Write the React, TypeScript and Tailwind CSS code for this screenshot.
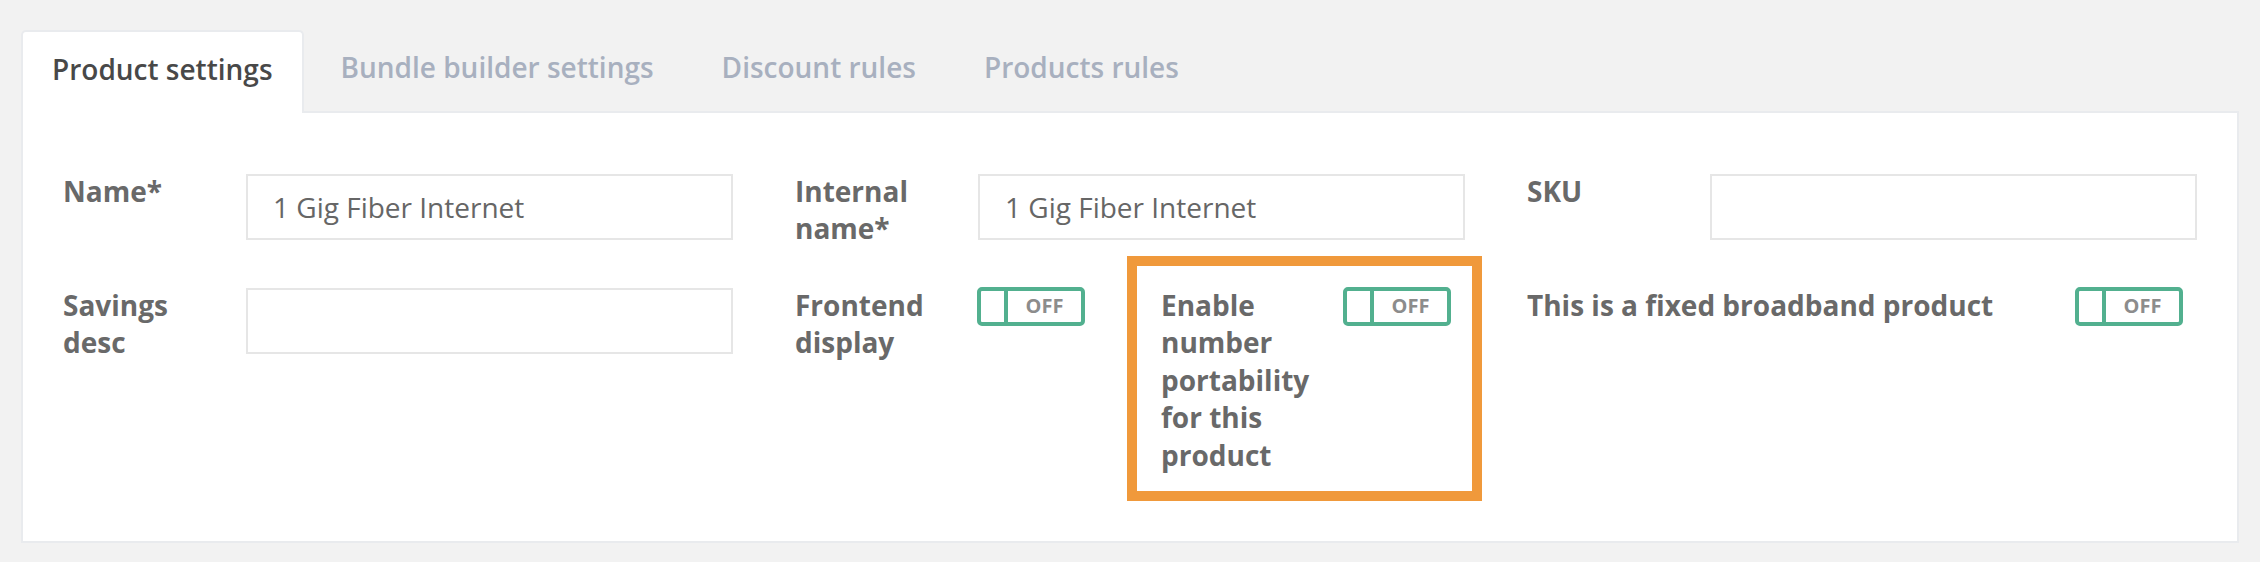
import React from "react";

const font = { fontFamily: '"Open Sans", "Noto Sans", sans-serif' };

function Toggle() {
  return (
    <div className="flex h-[39px] w-[108px] shrink-0 overflow-hidden rounded-[5px] border-[4px] border-[#52b08f] bg-white">
      <div className="h-full w-[27px] border-r-[4px] border-[#52b08f]" />
      <div className="flex flex-1 items-center justify-center text-[20px] font-bold leading-none text-[#8c8c8c]">
        OFF
      </div>
    </div>
  );
}

function TextField({ label, value }: { label: string; value?: string }) {
  return (
    <div className="col-span-2 flex items-start">
      <div className="w-[183px] shrink-0 pr-[33px] text-[28px] font-bold leading-[37.5px] text-[#696969]">
        {label}
      </div>
      <input
        readOnly
        defaultValue={value ?? ""}
        className="mt-px h-[66px] min-w-0 flex-1 border-2 border-[#e6e6e6] bg-white px-[25px] text-[28px] text-[#666] outline-none"
        style={font}
      />
    </div>
  );
}

function ToggleField({ label, labelWidth, children }: { label: string; labelWidth: string; children?: React.ReactNode }) {
  return (
    <div className="relative flex items-start">
      <div className={`${labelWidth} shrink-0 text-[28px] font-bold leading-[37.5px] text-[#696969]`}>{label}</div>
      <Toggle />
      {children}
    </div>
  );
}

export default function App() {
  return (
    <div className="h-[562px] w-full bg-[#f2f2f2] px-[21px] pt-[28px]" style={font}>
      <div className="flex items-end gap-[6px]">
        <div className="relative z-10 -mb-[2px] rounded-t-[5px] border-2 border-b-0 border-[#e9ebee] bg-white px-[29px] pb-[24px] pt-[19px] text-[28px] font-semibold leading-[37.5px] text-[#484848]">
          Product settings
        </div>
        <div className="border-2 border-transparent px-[29px] pb-[22px] pt-[19px] text-[28px] font-semibold leading-[37.5px] text-[#a8b0bf]">
          Bundle builder settings
        </div>
        <div className="border-2 border-transparent px-[29px] pb-[22px] pt-[19px] text-[28px] font-semibold leading-[37.5px] text-[#a8b0bf]">
          Discount rules
        </div>
        <div className="border-2 border-transparent px-[29px] pb-[22px] pt-[19px] text-[28px] font-semibold leading-[37.5px] text-[#a8b0bf]">
          Products rules
        </div>
      </div>
      <div className="border-2 border-[#e9ebee] bg-white px-[40px] pb-[67px] pt-[60px]">
        <div className="grid grid-cols-6 gap-x-[62px] gap-y-[39px]">
          <TextField label="Name*" value="1 Gig Fiber Internet" />
          <TextField label="Internal name*" value="1 Gig Fiber Internet" />
          <TextField label="SKU" />
          <TextField label="Savings desc" />
          <ToggleField label="Frontend display" labelWidth="w-[182px] pr-[32px]" />
          <ToggleField label="Enable number portability for this product" labelWidth="w-[182px] pr-[32px]">
            <div className="pointer-events-none absolute left-[-34px] top-[-31px] h-[245px] w-[355px] border-[10px] border-[#f0993b]" />
          </ToggleField>
          <div className="col-span-2">
            <ToggleField label="This is a fixed broadband product" labelWidth="w-[548px]" />
          </div>
        </div>
      </div>
    </div>
  );
}
